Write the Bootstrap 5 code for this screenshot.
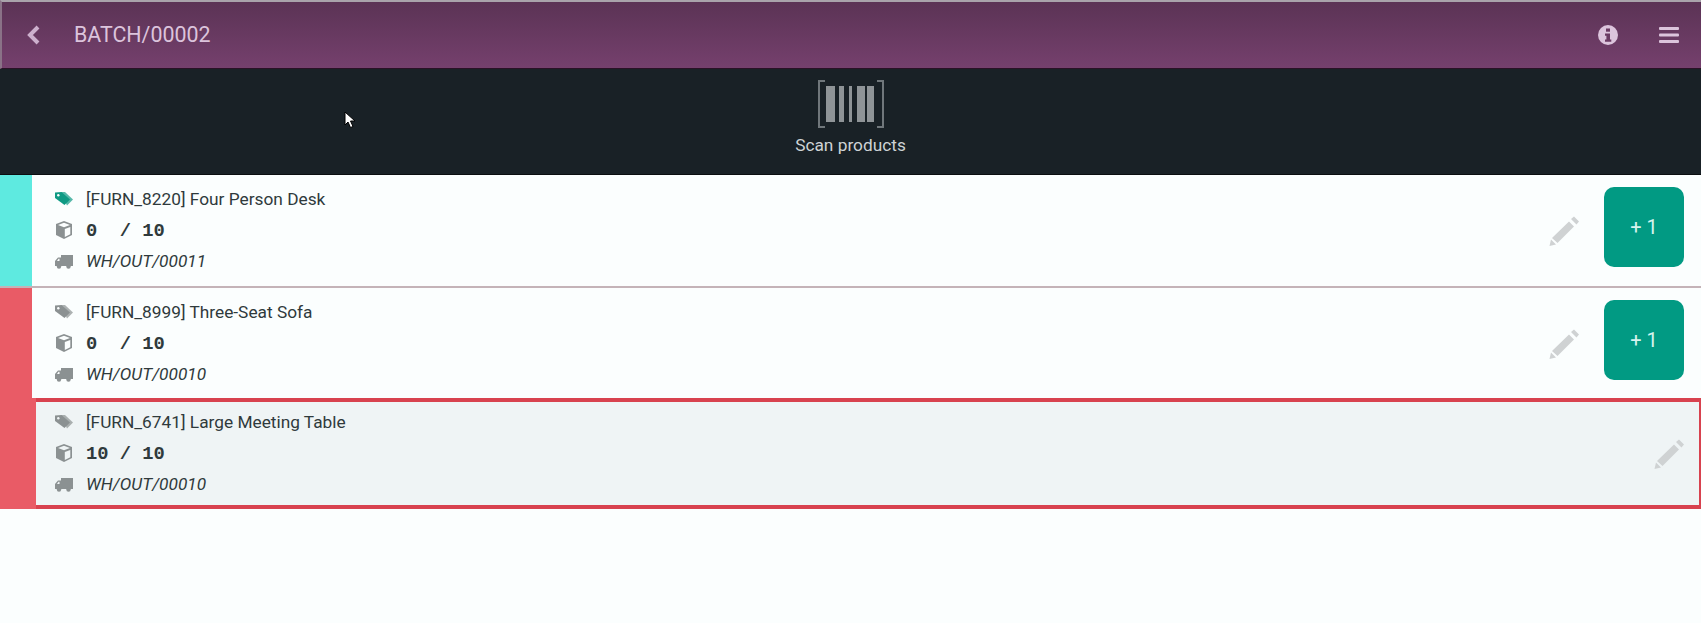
<!DOCTYPE html>
<html lang="en">
<head>
    <meta charset="UTF-8">
    <meta name="viewport" content="width=device-width, initial-scale=1.0">
    <title>BATCH/00002</title>
    <link href="https://cdn.jsdelivr.net/npm/bootstrap@5.3.0/dist/css/bootstrap.min.css" rel="stylesheet">
    <style>
        body {
            background-color: #fbfefe;
            font-family: Roboto, "Liberation Sans", sans-serif;
            color: #2f3a3c;
            min-height: 623px;
            position: relative;
            overflow: hidden;
        }
        .top-head {
            height: 69px;
            border-top: 2px solid #a9a3ab;
            border-left: 2px solid #8a7287;
            border-bottom: 1px solid #2a1226;
            background: linear-gradient(#5b3355, #75406d);
            color: #dcc4dc;
            padding: 0 22px 0 23px;
        }
        .back-icon {
            color: #cdb0cd;
        }
        .top-title {
            font-size: 21.400px;
            margin-left: 33px;
        }
        .info-icon {
            margin-right: 41px;
        }
        .scan-band {
            height: 106px;
            background-color: #192126;
            color: #ced3d5;
            font-size: 17.300px;
            border-bottom: 1px solid #0b0e10;
            padding-bottom: 5px;
        }
        .scan-band svg {
            margin-bottom: 5px;
        }
        .pick-row {
            height: 113px;
        }
        .row-second {
            height: 111px;
        }
        .row-sep {
            border-bottom: 2px solid #c4b3b8;
        }
        .row-stripe {
            width: 32px;
            flex: none;
        }
        .stripe-teal { background-color: #5eeae0; }
        .stripe-red { background-color: #e95b66; }
        .row-body {
            padding: 0 17px 0 22px;
        }
        .row-lines {
            gap: 9px;
            font-size: 17.300px;
            line-height: 22px;
            padding-bottom: 2px;
        }
        .row-lines > div {
            height: 22px;
        }
        .line-icon {
            width: 20px;
            height: 20px;
            margin-right: 12px;
            flex: none;
            color: #8b9192;
        }
        .icon-done { color: #0f9a84; }
        .qty-text {
            font-family: "Liberation Mono", monospace;
            font-weight: 700;
            font-size: 18.800px;
            white-space: pre;
            margin-top: 3px;
        }
        .ref-text {
            font-style: italic;
        }
        .edit-pencil {
            width: 32px;
            height: 32px;
            color: #cfd2d3;
            margin-right: 24px;
        }
        .add-btn {
            width: 80px;
            height: 80px;
            border-radius: 10px;
            border: 0;
            background-color: #019a83;
            color: #d6f3ee;
            font-size: 20px;
            margin-bottom: 7px;
        }
        .add-btn:hover { background-color: #019a83; color: #d6f3ee; }
        .row-done {
            height: 111px;
            margin-top: -1px;
        }
        .row-done .row-stripe { width: 36px; }
        .row-done .row-body {
            background-color: #eff4f5;
            border-top: 4px solid #d8424f;
            border-bottom: 4px solid #d8424f;
            border-right: 2px solid #d8424f;
            padding-left: 18px;
            padding-right: 14px;
        }
        .row-done .edit-pencil { margin-right: 0; }
        .mouse-arrow {
            position: absolute;
            left: 344px;
            top: 111px;
        }
    </style>
</head>
<body>
    <div class="top-head d-flex align-items-center">
        <svg class="back-icon" width="16" height="20" viewBox="0 0 16 20" fill="none" stroke="currentColor" stroke-width="4"><path d="M13 2 L5 10 L13 18"/></svg>
        <div class="top-title flex-grow-1">BATCH/00002</div>
        <svg class="info-icon" width="20" height="20" viewBox="0 0 20 20"><circle cx="10" cy="10" r="10" fill="currentColor"/><rect x="8" y="3.500" width="4" height="3.200" fill="#6b3a63"/><path d="M7 8.500h5v6h1.300v2.200H7v-2.200h1.400v-3.800H7z" fill="#6b3a63"/></svg>
        <svg width="20" height="16" viewBox="0 0 20 16" fill="currentColor"><rect y="0" width="20" height="3" rx="1"/><rect y="6.500" width="20" height="3" rx="1"/><rect y="13" width="20" height="3" rx="1"/></svg>
    </div>

    <div class="scan-band d-flex flex-column align-items-center justify-content-center">
        <svg width="68" height="48" viewBox="0 0 68 48" fill="none">
            <path d="M8 1H2V47H8M60 1H66V47H60" stroke="#70777b" stroke-width="2"/>
            <g fill="#8f9497">
                <rect x="9" y="6" width="9" height="36"/>
                <rect x="22" y="6" width="5" height="36"/>
                <rect x="32" y="6" width="3" height="36"/>
                <rect x="40" y="6" width="8" height="36"/>
                <rect x="50" y="6" width="7" height="36"/>
            </g>
        </svg>
        <div>Scan products</div>
    </div>

    <div class="pick-row row-sep d-flex">
        <div class="row-stripe stripe-teal"></div>
        <div class="row-body d-flex flex-grow-1 align-items-center">
            <div class="row-lines d-flex flex-column flex-grow-1">
                <div class="d-flex align-items-center">
                    <svg class="line-icon icon-done" viewBox="0 0 20 20" fill="currentColor"><path d="M7 3h4l8 7.500-6 6z" opacity=".7"/><path d="M1 3.500 7.500 3 16 10.500 10.500 16 1 9z"/><circle cx="4.300" cy="6.300" r="1.200" fill="#fbfefe"/></svg>
                    <span>[FURN_8220] Four Person Desk</span>
                </div>
                <div class="d-flex align-items-center">
                    <svg class="line-icon" viewBox="0 0 20 20" fill="currentColor"><path d="M10 1 18 4v11l-8 4-8-4V4z"/><path d="M4 5l6 2.300L16 5l-6-2.300zM10.800 9v8l5.500-2.800V7z" fill="#fbfefe"/></svg>
                    <span class="qty-text">0  / 10</span>
                </div>
                <div class="d-flex align-items-center">
                    <svg class="line-icon" viewBox="0 0 20 20" fill="currentColor"><path d="M7 4h12v11H7zM1 10l3-3.500h3V15H1zM3 10h2.500V7.800H4.500z"/><circle cx="5" cy="15.500" r="2.200"/><circle cx="14.500" cy="15.500" r="2.200"/></svg>
                    <span class="ref-text">WH/OUT/00011</span>
                </div>
            </div>
            <svg class="edit-pencil" viewBox="0 0 32 32" fill="currentColor"><path d="M23 4l3-2.500 5 5L28.500 9.500zM21 6.500l5 5L9.500 28 4 23zM3 24.500l5 5L1.500 31z"/></svg>
            <button type="button" class="btn add-btn">+ 1</button>
        </div>
    </div>

    <div class="pick-row row-second d-flex">
        <div class="row-stripe stripe-red"></div>
        <div class="row-body d-flex flex-grow-1 align-items-center">
            <div class="row-lines d-flex flex-column flex-grow-1">
                <div class="d-flex align-items-center">
                    <svg class="line-icon" viewBox="0 0 20 20" fill="currentColor"><path d="M7 3h4l8 7.500-6 6z" opacity=".7"/><path d="M1 3.500 7.500 3 16 10.500 10.500 16 1 9z"/><circle cx="4.300" cy="6.300" r="1.200" fill="#fbfefe"/></svg>
                    <span>[FURN_8999] Three-Seat Sofa</span>
                </div>
                <div class="d-flex align-items-center">
                    <svg class="line-icon" viewBox="0 0 20 20" fill="currentColor"><path d="M10 1 18 4v11l-8 4-8-4V4z"/><path d="M4 5l6 2.300L16 5l-6-2.300zM10.800 9v8l5.500-2.800V7z" fill="#fbfefe"/></svg>
                    <span class="qty-text">0  / 10</span>
                </div>
                <div class="d-flex align-items-center">
                    <svg class="line-icon" viewBox="0 0 20 20" fill="currentColor"><path d="M7 4h12v11H7zM1 10l3-3.500h3V15H1zM3 10h2.500V7.800H4.500z"/><circle cx="5" cy="15.500" r="2.200"/><circle cx="14.500" cy="15.500" r="2.200"/></svg>
                    <span class="ref-text">WH/OUT/00010</span>
                </div>
            </div>
            <svg class="edit-pencil" viewBox="0 0 32 32" fill="currentColor"><path d="M23 4l3-2.500 5 5L28.500 9.500zM21 6.500l5 5L9.500 28 4 23zM3 24.500l5 5L1.500 31z"/></svg>
            <button type="button" class="btn add-btn">+ 1</button>
        </div>
    </div>

    <div class="row-done d-flex">
        <div class="row-stripe stripe-red"></div>
        <div class="row-body d-flex flex-grow-1 align-items-center">
            <div class="row-lines d-flex flex-column flex-grow-1">
                <div class="d-flex align-items-center">
                    <svg class="line-icon" viewBox="0 0 20 20" fill="currentColor"><path d="M7 3h4l8 7.500-6 6z" opacity=".7"/><path d="M1 3.500 7.500 3 16 10.500 10.500 16 1 9z"/><circle cx="4.300" cy="6.300" r="1.200" fill="#eff4f5"/></svg>
                    <span>[FURN_6741] Large Meeting Table</span>
                </div>
                <div class="d-flex align-items-center">
                    <svg class="line-icon" viewBox="0 0 20 20" fill="currentColor"><path d="M10 1 18 4v11l-8 4-8-4V4z"/><path d="M4 5l6 2.300L16 5l-6-2.300zM10.800 9v8l5.500-2.800V7z" fill="#eff4f5"/></svg>
                    <span class="qty-text">10 / 10</span>
                </div>
                <div class="d-flex align-items-center">
                    <svg class="line-icon" viewBox="0 0 20 20" fill="currentColor"><path d="M7 4h12v11H7zM1 10l3-3.500h3V15H1zM3 10h2.500V7.800H4.500z"/><circle cx="5" cy="15.500" r="2.200"/><circle cx="14.500" cy="15.500" r="2.200"/></svg>
                    <span class="ref-text">WH/OUT/00010</span>
                </div>
            </div>
            <svg class="edit-pencil" viewBox="0 0 32 32" fill="currentColor"><path d="M23 4l3-2.500 5 5L28.500 9.500zM21 6.500l5 5L9.500 28 4 23zM3 24.500l5 5L1.500 31z"/></svg>
        </div>
    </div>

    <svg class="mouse-arrow" width="12" height="18" viewBox="0 0 12 18"><path d="M1 1v13l3-3 2.500 5.500 2.500-1L6.500 10H11z" fill="#fff" stroke="#000"/></svg>

    <script src="https://cdn.jsdelivr.net/npm/bootstrap@5.3.0/dist/js/bootstrap.bundle.min.js"></script>
</body>
</html>
